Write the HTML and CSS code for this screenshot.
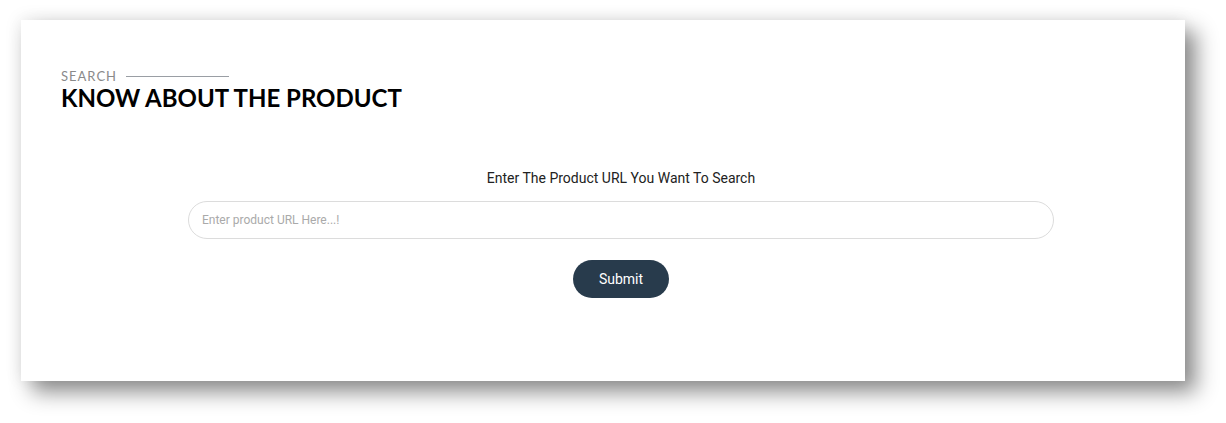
FILE: index.html
```html
<!DOCTYPE html>
<html>
<head>
<meta charset="utf-8">
<link rel="stylesheet" href="styles.css">
</head>
<body>
<div class="card">
  <div class="section-head">
    <div class="eyebrow"><span>SEARCH</span><span class="rule"></span></div>
    <h1 class="title">KNOW ABOUT THE PRODUCT</h1>
  </div>
  <form class="search-form">
    <label class="label" for="url">Enter The Product URL You Want To Search</label>
    <input id="url" class="url-input" type="text" placeholder="Enter product URL Here...!">
    <button type="button" class="submit">Submit</button>
  </form>
</div>
</body>
</html>
```

FILE: styles.css
```css
html, body {
  margin: 0;
  padding: 0;
  background: #ffffff;
}
body {
  box-sizing: border-box;
  min-height: 423px;
  padding: 20px 0 42px 21px;
  font-family: Roboto, "Liberation Sans", sans-serif;
}
.card {
  box-sizing: border-box;
  width: 1164px;
  height: 361px;
  background: #fff;
  box-shadow: 11px 11px 20px rgba(0,0,0,0.45), -2px -2px 16px rgba(0,0,0,0.07);
  padding: 48px 4px 0 40px;
}
.section-head {
  display: flex;
  flex-direction: column;
}
.eyebrow {
  display: flex;
  align-items: center;
  gap: 9px;
  font-family: Lato, "Open Sans", sans-serif;
  font-size: 13px;
  letter-spacing: 1px;
  color: #8a8a8a;
  line-height: 16px;
}
.rule {
  width: 103px;
  height: 1px;
  background: #9a9ea4;
}
.title {
  margin: 0;
  font-family: Lato, "Open Sans", sans-serif;
  font-weight: 700;
  font-size: 24px;
  line-height: 27px;
  color: #000;
}
.search-form {
  display: flex;
  flex-direction: column;
  align-items: center;
  padding-top: 59px;
}
.label {
  font-size: 14px;
  color: #222;
  line-height: 16px;
}
.url-input {
  box-sizing: border-box;
  margin-top: 15px;
  width: 866px;
  height: 38px;
  border: 1px solid #dcdcdc;
  border-radius: 19px;
  padding: 0 13px;
  font-family: Roboto, sans-serif;
  font-size: 12px;
  color: #333;
  outline: none;
}
.url-input::placeholder {
  color: #aaa;
}
.submit {
  margin-top: 21px;
  width: 96px;
  height: 38px;
  border: none;
  border-radius: 19px;
  background: #283b4c;
  color: #fff;
  font-family: Roboto, sans-serif;
  font-size: 14px;
}
```
